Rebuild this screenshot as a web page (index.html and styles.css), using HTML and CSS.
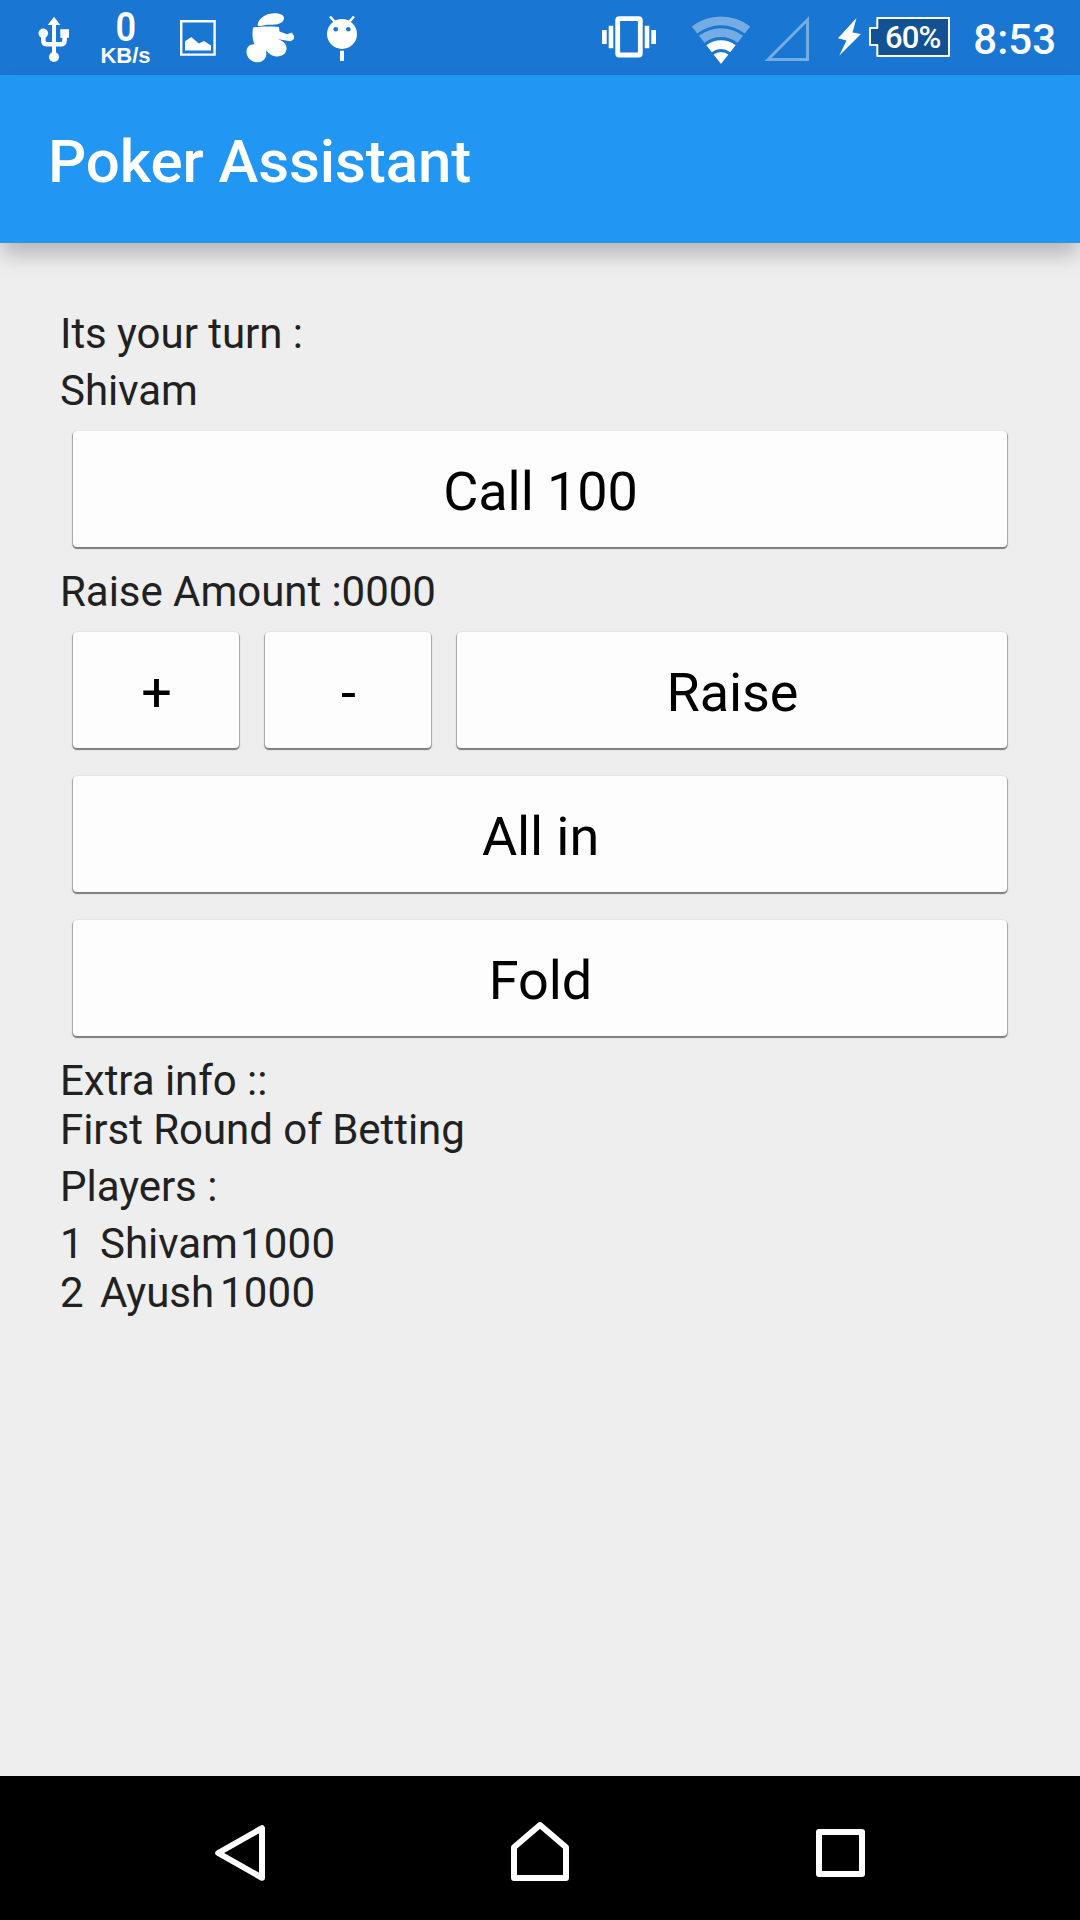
FILE: index.html
```html
<!DOCTYPE html>
<html lang="en">
<head>
<meta charset="utf-8">
<title>Poker Assistant</title>
<link rel="stylesheet" href="styles.css">
</head>
<body>
<div class="screen">
  <header class="status-bar">
    <div class="status-left">
      <svg class="icon" width="40" height="75" viewBox="34 0 40 75">
        <path class="solid" d="M54 16.7 60.3 25H56v32h-4V25h-4.3z"/>
        <path class="line-usb" d="M43.3 35v5.5q0 3.8 3.8 3.8h13.7q3.8 0 3.8-3.8V35"/>
        <circle class="solid" cx="54" cy="57" r="5"/>
        <circle class="solid" cx="43.3" cy="33.3" r="4.8"/>
        <path class="solid" d="M60.3 29.2H69v8.6h-8.7z"/>
      </svg>
      <div class="net-speed"><span class="net-value">0</span><span class="net-unit">KB/s</span></div>
      <svg class="icon" width="44" height="75" viewBox="176 0 44 75">
        <path class="frame" d="M181.2 21.2h33.4v33.4h-33.4z"/>
        <path class="solid" d="M185 41.3 191.3 37l7.4 6.5 5.3-2.4 7 4.5v5h-26z"/>
      </svg>
      <svg class="icon" width="56" height="75" viewBox="242 0 56 75">
        <path class="solid" d="M257.6 24.5C259 18 266 13.3 275 13.3c6 0 9 2.4 9 5 0 3.4-3.5 5.6-8.5 6.2-5 .5-7.5-.2-11 .8-4 1.2-7.2 1-6.900-.8z"/>
        <path class="solid" d="M253 27.400c8-1 18-1 26-.4l.5 4.500 7.500 2.700 5.200-1.600.3 1.500 1.700 1.900-.4 3.300-3.300 1.900c-4.500-.3-7.500-1.200-12.500-2.200 6.500 2.500 9 6 8.500 10.500-.8 5-5.500 7-10 7-4.500-.2-8.500-3.500-10.500-6.500l.4 3.500c0 5-3.500 8.800-9 8.800-6 0-10.900-4.500-10.900-10.500 0-4.500 2.500-7.300 8-7.500-2-4.500-2.500-11-1.500-16.900z"/>
      </svg>
      <svg class="icon" width="36" height="75" viewBox="324 0 36 75">
        <circle class="solid" cx="342" cy="34" r="15"/>
        <path class="antenna" d="m330 16.500 4.500 5M354 16.500l-4.500 5"/>
        <circle class="eye" cx="335.700" cy="29.300" r="2.300"/>
        <circle class="eye" cx="348.300" cy="29.300" r="2.300"/>
        <path class="solid" d="M340 50.700h4V61h-4z"/>
      </svg>
    </div>
    <div class="status-right">
      <svg class="icon" width="60" height="75" viewBox="599 0 60 75">
        <rect class="phone" x="617.700" y="18.700" width="22.600" height="36.300" rx="1.500"/>
        <path class="solid" d="M608.700 25.700h4.600v22.600h-4.600zM602 30h4.700v14H602zM644.700 25.700h4.600v22.600h-4.600zM651.300 30h4.700v14h-4.700z"/>
      </svg>
      <svg class="icon" width="62" height="75" viewBox="690 0 62 75">
        <g transform="translate(721 64)">
          <path class="faint" d="M-29.200-37.500A47.500 47.500 0 0 1 29.200-37.500L23.700-30.500A38.600 38.600 0 0 0-23.700-30.500z"/>
          <path class="faint" d="M-22-28.300A35.900 35.900 0 0 1 22-28.300L16.500-21.200A26.800 26.800 0 0 0-16.500-21.200z"/>
          <path class="solid" d="M-14.600-18.800A23.800 23.800 0 0 1 14.600-18.800L9.200-11.800A15 15 0 0 0-9.200-11.800z"/>
          <path class="solid" d="M-7.400-9.500A12 12 0 0 1 7.400-9.500L0 0z"/>
        </g>
      </svg>
      <svg class="icon" width="48" height="75" viewBox="763 0 48 75">
        <path class="signal" d="M768 59.500 807.500 19.800V59.500z"/>
      </svg>
      <svg class="icon" width="26" height="75" viewBox="836 0 26 75">
        <path class="solid" d="M856.500 18 852.500 32.500 861 34 839.200 55.800 846.500 40.500 838 38.300z"/>
      </svg>
      <div class="battery">
        <svg class="icon" width="84" height="75" viewBox="868 0 84 75">
          <path class="cell" d="M877.300 18h71.700v38h-71.700V45h-7.300V28h7.300z"/>
        </svg>
        <span class="battery-level">60%</span>
      </div>
      <span class="clock">8:53</span>
    </div>
  </header>

  <div class="toolbar"><h1 class="title">Poker Assistant</h1></div>

  <main class="content">
    <p class="line spaced">Its your turn :</p>
    <p class="line">Shivam</p>
    <button class="btn btn-call">Call 100</button>
    <p class="line">Raise Amount :0000</p>
    <div class="raise-row">
      <button class="btn">+</button>
      <button class="btn">-</button>
      <button class="btn">Raise</button>
    </div>
    <button class="btn btn-stacked">All in</button>
    <button class="btn btn-stacked">Fold</button>
    <p class="line extra">Extra info ::</p>
    <p class="line spaced">First Round of Betting</p>
    <p class="line spaced">Players :</p>
    <div class="line player"><span class="seat">1</span><span class="name-first">Shivam</span><span class="chips">1000</span></div>
    <div class="line player"><span class="seat">2</span><span class="name-second">Ayush</span><span class="chips">1000</span></div>
  </main>

  <nav class="nav-bar">
    <svg class="icon" width="300" height="144" viewBox="90 1776 300 144">
      <path class="nav-line" d="M218.200 1853 262 1828.200v49.600z"/>
    </svg>
    <svg class="icon" width="300" height="144" viewBox="390 1776 300 144">
      <path class="nav-line" d="M514 1847.300 540 1825l26 22.300V1878h-52z"/>
    </svg>
    <svg class="icon" width="300" height="144" viewBox="690 1776 300 144">
      <path class="nav-line" d="M819 1832h43v42h-43z"/>
    </svg>
  </nav>
</div>
</body>
</html>
```

FILE: styles.css
```css
* { box-sizing: border-box; }

body {
  margin: 0;
  font-family: Roboto, "Liberation Sans", sans-serif;
  background: #eee;
}

.screen {
  display: flex;
  flex-direction: column;
  width: 1080px;
  height: 1920px;
  overflow: hidden;
  background: #eee;
}

/* Status bar */
.status-bar {
  display: flex;
  justify-content: space-between;
  flex: none;
  height: 75px;
  padding: 0 24px 0 34px;
  background: #1976d2;
  color: #fff;
}
.status-left, .status-right { display: flex; }
.icon { display: block; flex: none; }
.status-left .icon:nth-child(4) { margin-left: 22px; }
.status-left .icon:nth-child(5) { margin-left: 26px; }
.status-right .icon:nth-child(2) { margin-left: 31px; }
.status-right .icon:nth-child(3) { margin-left: 11px; }
.status-right .icon:nth-child(4) { margin-left: 25px; }

.solid { fill: #fff; }
.faint { fill: #fff; fill-opacity: .4; }
.line-usb { fill: none; stroke: #fff; stroke-width: 4.5; }
.frame { fill: none; stroke: #fff; stroke-width: 2.4; }
.antenna { fill: none; stroke: #fff; stroke-width: 2.6; }
.eye { fill: #1976d2; }
.phone { fill: none; stroke: #fff; stroke-width: 4.8; }
.signal { fill: none; stroke: #fff; stroke-opacity: .4; stroke-width: 3; }
.cell { fill: #125293; stroke: #fff; stroke-width: 2; stroke-linejoin: round; }

.net-speed {
  display: flex;
  flex-direction: column;
  align-items: center;
  width: 102px;
  padding: 8px 0 0 1px;
}
.net-value { font-size: 41px; font-weight: 600; line-height: 38px; transform: scaleX(.88); }
.net-unit { font: bold 22px/19px "Liberation Sans", sans-serif; }

.battery { position: relative; margin-left: 6px; }
.battery-level {
  position: absolute;
  inset: 0 2px 0 7px;
  font-size: 31px;
  font-weight: 500;
  line-height: 75px;
  letter-spacing: -.8px;
  text-align: center;
}
.clock { margin-left: 21px; font-size: 42px; font-weight: 500; line-height: 79px; }

/* App bar */
.toolbar {
  display: flex;
  align-items: center;
  flex: none;
  height: 168px;
  padding: 5px 48px 0;
  background: #2196f3;
  box-shadow: 0 14px 20px -2px rgba(0, 0, 0, .23);
}
.title { margin: 0; font-size: 60px; font-weight: 500; line-height: 70px; letter-spacing: -.08px; color: #fff; }

/* Game controls */
.content { flex: 1; padding: 66px 60px 0; color: #212121; }
.line { margin: 0; font-size: 42px; line-height: 49px; letter-spacing: -.04px; }
.spaced { margin-bottom: 8px; }
.extra { margin-top: 20px; }

.btn {
  display: block;
  width: 934px;
  height: 116px;
  margin: 0 13px;
  padding: 5px 0 0 1px;
  border: 0;
  border-radius: 4px;
  background: #fdfdfd;
  box-shadow: 0 1px 1px 1px rgba(0, 0, 0, .3), 0 2px 1px rgba(0, 0, 0, .25);
  color: #000;
  font: 400 54px/63px Roboto, "Liberation Sans", sans-serif;
  letter-spacing: -.1px;
}
.btn-call { margin-top: 16px; margin-bottom: 20px; }
.raise-row {
  display: grid;
  grid-template-columns: 166px 166px 550px;
  gap: 26px;
  margin: 16px 13px 0;
}
.raise-row .btn { width: 100%; margin: 0; }
.btn-stacked { margin-top: 28px; }

.player { display: flex; }
.seat { width: 40px; }
.name-first { width: 140px; }
.name-second { width: 120px; }
.chips { letter-spacing: .2px; }

/* System navigation */
.nav-bar {
  display: flex;
  justify-content: center;
  flex: none;
  height: 144px;
  background: #000;
}
.nav-line { fill: none; stroke: #fff; stroke-width: 6; stroke-linejoin: round; }
```
